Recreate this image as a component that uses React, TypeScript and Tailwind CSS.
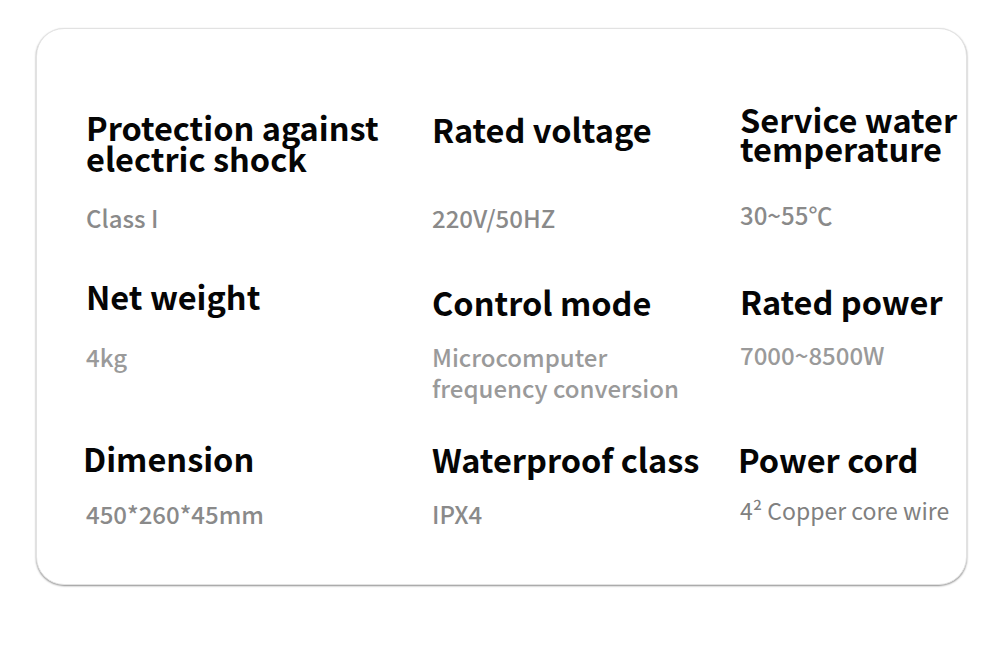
import React from 'react';

interface Spec {
  title: string[];
  value: React.ReactNode[];
  titleClass: string;
  valueClass: string;
}

const rows: { height: string; cells: Spec[] }[] = [
  {
    height: 'h-[177px]',
    cells: [
      {
        title: ['Protection against', 'electric shock'],
        value: ['Class I'],
        titleClass: 'h-[98px] pt-[7px] leading-[31px]',
        valueClass: 'text-[24px] font-medium text-[#8a8a8a]',
      },
      {
        title: ['Rated voltage'],
        value: ['220V/50HZ'],
        titleClass: 'h-[98px] pt-[10px] leading-[30px]',
        valueClass: 'text-[24px] font-medium text-[#8a8a8a]',
      },
      {
        title: ['Service water', 'temperature'],
        value: ['30~55℃'],
        titleClass: 'h-[95px] leading-[29px]',
        valueClass: 'text-[24px] font-medium text-[#8a8a8a]',
      },
    ],
  },
  {
    height: 'h-[162px]',
    cells: [
      {
        title: ['Net weight'],
        value: ['4kg'],
        titleClass: 'h-[60px] leading-[30px]',
        valueClass: 'text-[24px] font-medium text-[#9a9a9a]',
      },
      {
        title: ['Control mode'],
        value: ['Microcomputer', 'frequency conversion'],
        titleClass: 'h-[60px] pt-[6px] leading-[30px]',
        valueClass: 'text-[24px] font-medium text-[#9a9a9a]',
      },
      {
        title: ['Rated power'],
        value: ['7000~8500W'],
        titleClass: 'h-[58px] pt-[5px] leading-[30px]',
        valueClass: 'text-[24px] font-medium text-[#9a9a9a]',
      },
    ],
  },
  {
    height: 'h-[120px]',
    cells: [
      {
        title: ['Dimension'],
        value: ['450*260*45mm'],
        titleClass: 'h-[55px] -ml-[3px] leading-[30px]',
        valueClass: 'text-[24px] font-medium text-[#8a8a8a]',
      },
      {
        title: ['Waterproof class'],
        value: ['IPX4'],
        titleClass: 'h-[55px] pt-[1px] leading-[30px]',
        valueClass: 'text-[24px] font-medium text-[#8a8a8a]',
      },
      {
        title: ['Power cord'],
        value: ['4² Copper core wire'],
        titleClass: 'h-[52px] -ml-[2px] pt-[1px] leading-[30px]',
        valueClass: 'text-[23px] font-normal text-[#808080]',
      },
    ],
  },
];

const SpecCell: React.FC<{ spec: Spec }> = ({ spec }) => (
  <div className="flex flex-col">
    <div className={`text-[32.5px] font-bold text-[#050505] ${spec.titleClass}`}>
      {spec.title.map((line) => (
        <div key={line}>{line}</div>
      ))}
    </div>
    <div className={`leading-[31px] ${spec.valueClass}`}>
      {spec.value.map((line, i) => (
        <div key={i}>{line}</div>
      ))}
    </div>
  </div>
);

export default function App() {
  return (
    <div
      className="w-[1000px] h-[666px] bg-white pt-[28px] pl-[36px]"
      style={{ fontFamily: '"Noto Sans CJK SC", "Noto Sans", sans-serif' }}
    >
      <div className="w-[931px] h-[557px] rounded-[28px] border border-[#e2e2e2] bg-white shadow-[0_1px_2px_rgba(0,0,0,0.45)] pt-[75px] pl-[49px]">
        {rows.map((row, r) => (
          <div key={r} className={`grid grid-cols-[346px_308px_1fr] ${row.height}`}>
            {row.cells.map((cell) => (
              <SpecCell key={cell.title[0]} spec={cell} />
            ))}
          </div>
        ))}
      </div>
    </div>
  );
}
